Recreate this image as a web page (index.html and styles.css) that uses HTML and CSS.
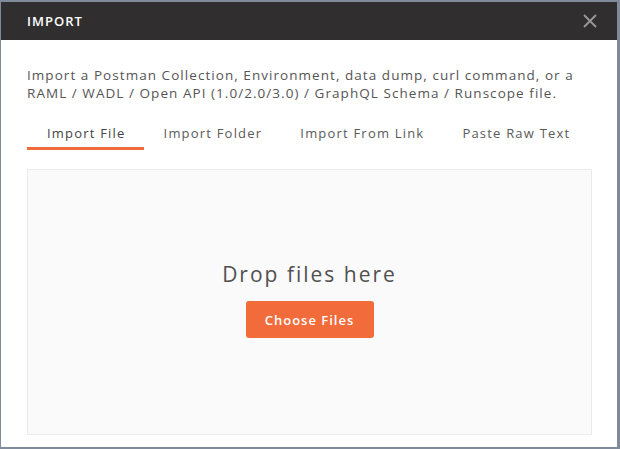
FILE: index.html
```html
<!DOCTYPE html>
<html>
<head>
<meta charset="utf-8">
<link rel="stylesheet" href="styles.css">
</head>
<body>
<div class="modal">
  <div class="header">
    <span class="title">IMPORT</span>
    <svg class="close" width="14" height="14" viewBox="0 0 14 14"><path d="M1 1L13 13M13 1L1 13" stroke="#9a9a9a" stroke-width="1.8" fill="none"/></svg>
  </div>
  <div class="content">
    <p class="desc">Import a Postman Collection, Environment, data dump, curl command, or a RAML / WADL / Open API (1.0/2.0/3.0) / GraphQL Schema / Runscope file.</p>
    <div class="tabs">
      <div class="tab active">Import File</div>
      <div class="tab">Import Folder</div>
      <div class="tab">Import From Link</div>
      <div class="tab">Paste Raw Text</div>
    </div>
    <div class="drop">
      <div class="drop-text">Drop files here</div>
      <button class="choose">Choose Files</button>
    </div>
  </div>
</div>
</body>
</html>
```
FILE: styles.css
```css
html, body {
  margin: 0;
  padding: 0;
}
body {
  background: #7f8b9a;
  padding: 2px 3px 2px 1px;
  font-family: "Open Sans", "Liberation Sans", sans-serif;
}
.modal {
  background: #ffffff;
  height: 445px;
  display: flex;
  flex-direction: column;
}
.header {
  height: 38px;
  background: #302e2e;
  display: flex;
  align-items: center;
  justify-content: space-between;
  padding: 0 20px 0 26px;
  flex: none;
}
.title {
  color: #ffffff;
  font-size: 13px;
  font-weight: 600;
  letter-spacing: 1px;
}
.close {
  display: block;
  margin-top: -1px;
}
.content {
  padding: 26px 25px 0 26px;
}
.desc {
  margin: 0;
  font-size: 13.5px;
  line-height: 18px;
  letter-spacing: 1.05px;
  color: #555555;
}
.tabs {
  display: flex;
  margin-top: 22px;
}
.tab {
  font-size: 13px;
  line-height: 18px;
  letter-spacing: 1.2px;
  color: #5a5a5a;
  padding: 0 18px 5px 20px;
  border-bottom: 3px solid transparent;
}
.tab.active {
  color: #444444;
  border-bottom-color: #f26b3a;
}
.drop {
  margin-top: 19px;
  height: 264px;
  background: #fafafa;
  border: 1px solid #ebebeb;
  display: flex;
  flex-direction: column;
  align-items: center;
  justify-content: center;
  gap: 15px;
}
.drop-text {
  font-size: 21px;
  line-height: 24px;
  letter-spacing: 2px;
  color: #505050;
  margin-top: -4px;
}
.choose {
  width: 128px;
  height: 37px;
  background: #f26b3a;
  border: none;
  border-radius: 3px;
  color: #ffffff;
  font-family: "Open Sans", "Liberation Sans", sans-serif;
  font-size: 13px;
  font-weight: 600;
  letter-spacing: 1px;
}
```
